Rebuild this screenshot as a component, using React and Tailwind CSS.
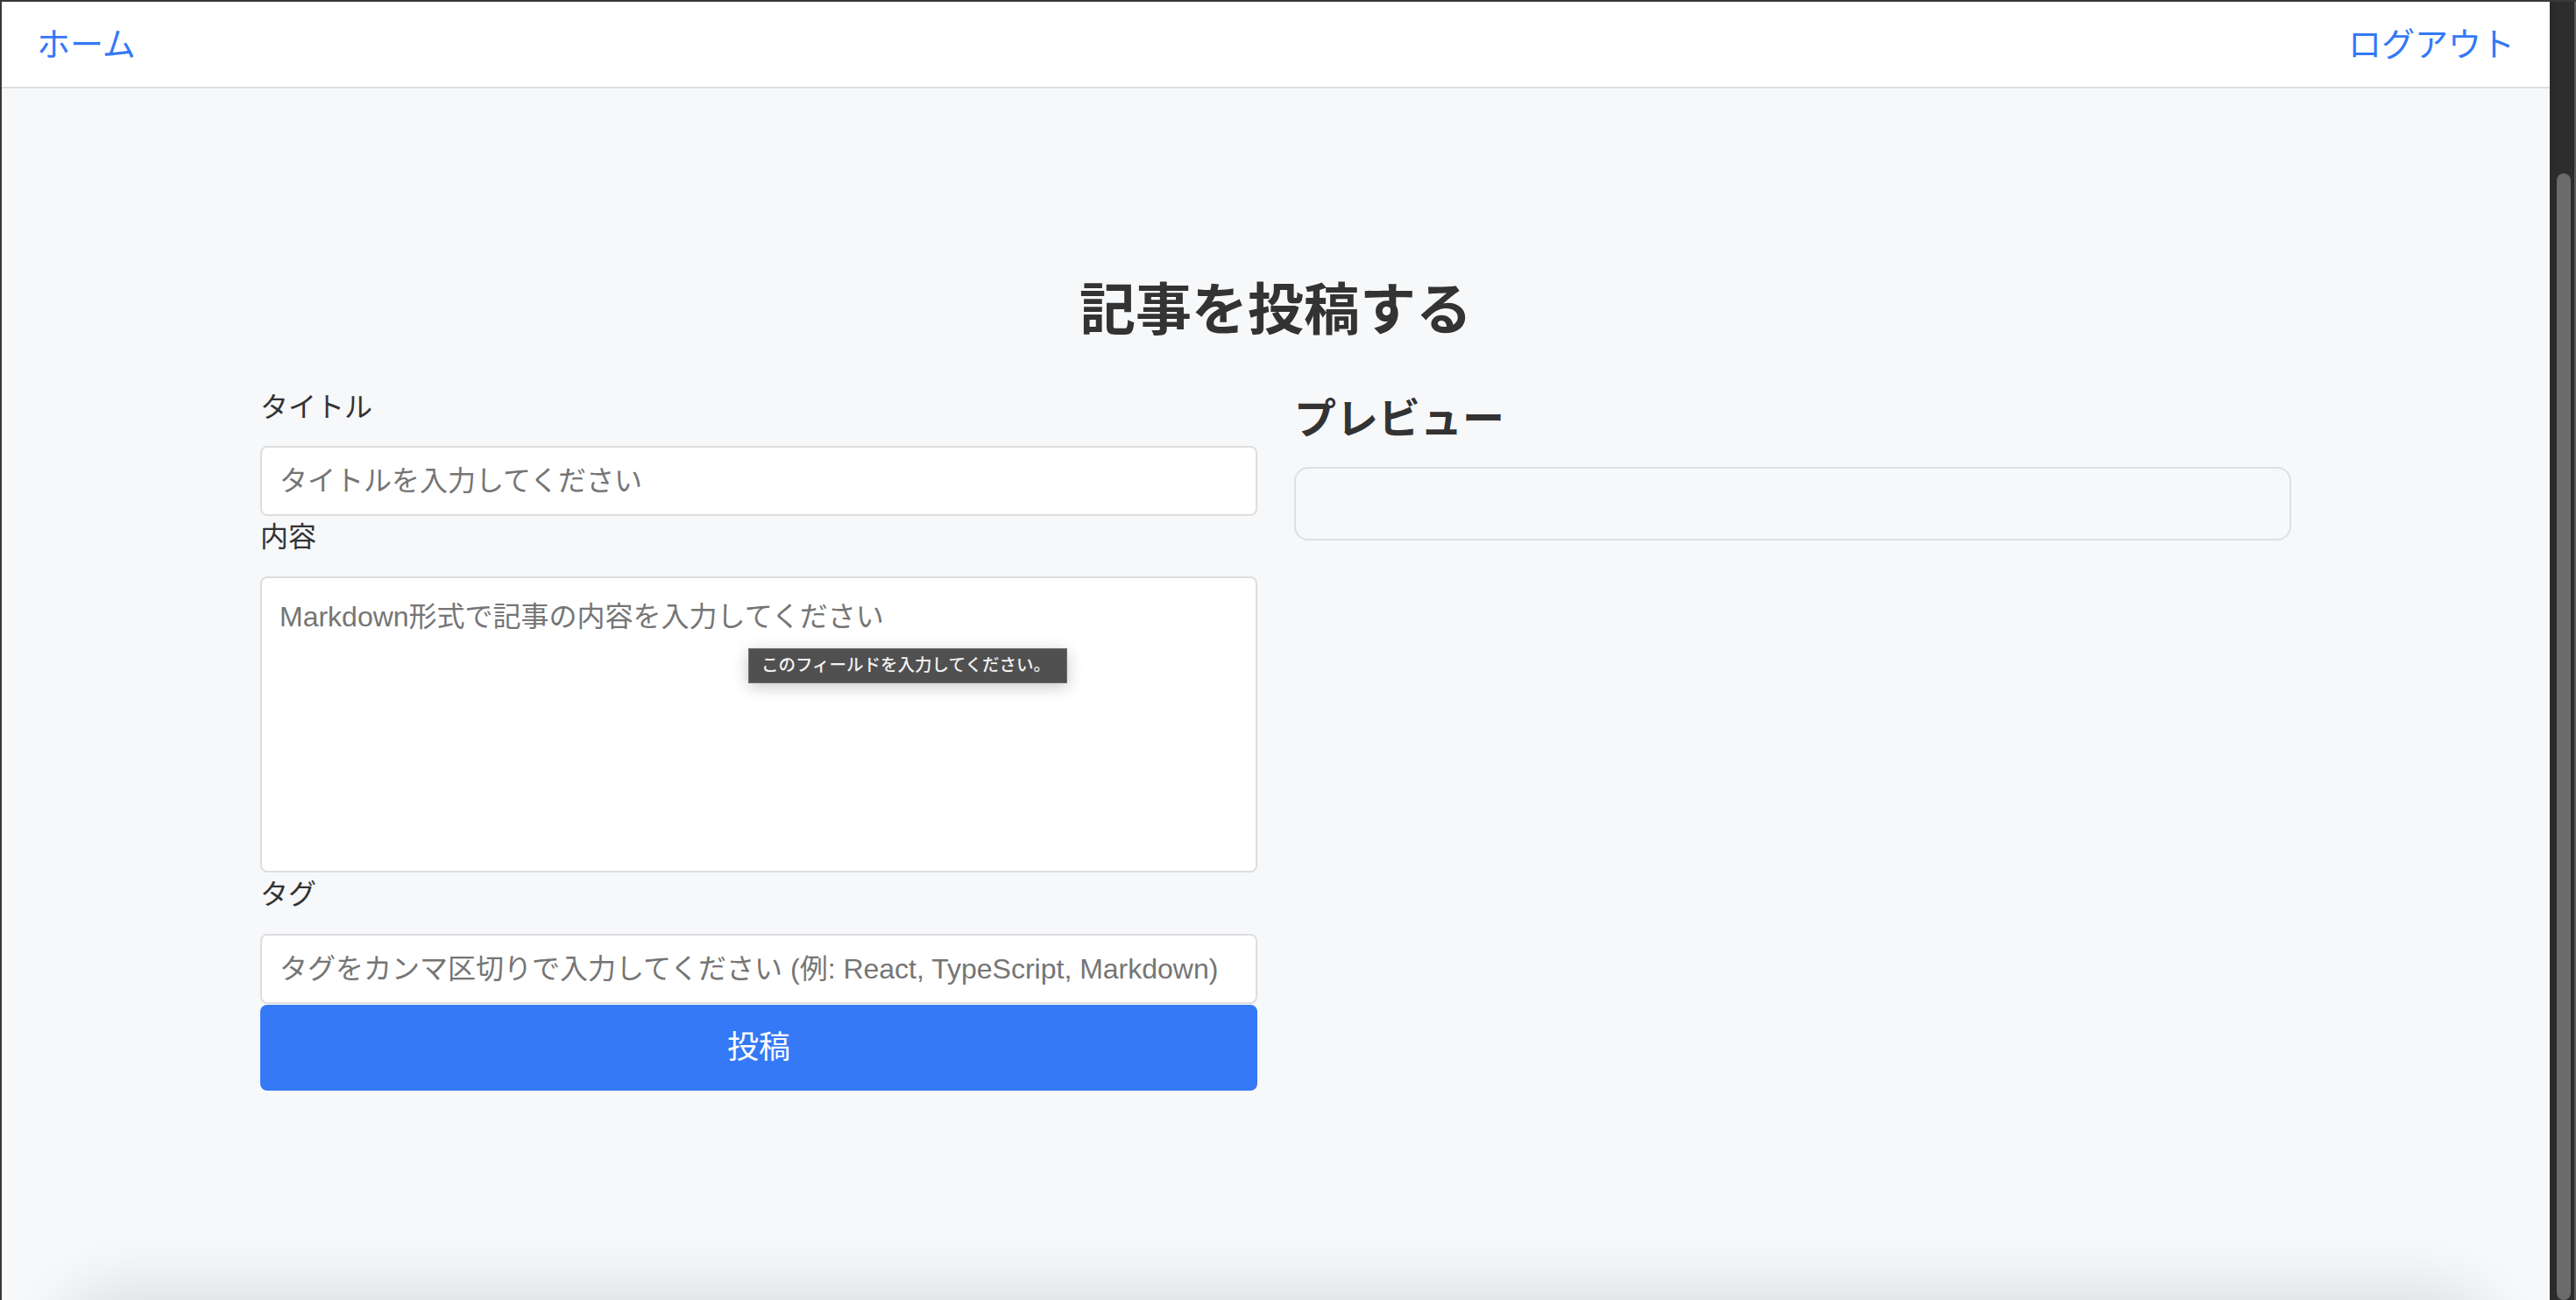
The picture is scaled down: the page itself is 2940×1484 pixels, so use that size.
import React from 'react';

// 記事投稿ページ（エディタ + プレビュー）
export default function App() {
  return (
    <div className="w-[2940px] h-[1484px] flex bg-[#2d2d2d] font-['Liberation_Sans','Noto_Sans_CJK_JP',sans-serif] overflow-hidden">
      {/* ブラウザの表示領域 */}
      <div className="relative flex-1 flex flex-col border-t-2 border-l-2 border-[#383838] bg-[#f7f8fa] overflow-hidden">
        {/* ヘッダー */}
        <header className="h-[99px] shrink-0 bg-white border-b-2 border-[#dedede] px-[40px] flex items-center justify-between">
          <a className="text-[38px] leading-none text-[#3478f6]">ホーム</a>
          <a className="text-[38px] leading-none text-[#3478f6]">ログアウト</a>
        </header>

        <main className="w-[2318px] mx-auto pt-[215px]">
          <h1 className="text-[64px] leading-[77px] font-bold text-[#333] text-center mb-[48px]">記事を投稿する</h1>

          <div className="grid grid-cols-2 gap-[42px] items-start">
            {/* 入力フォーム */}
            <form className="flex flex-col text-[#333]">
              <label className="text-[32px] leading-[48px] mb-[20px]">タイトル</label>
              <input
                type="text"
                placeholder="タイトルを入力してください"
                className="h-[80px] bg-white border-2 border-[#dedede] rounded-[8px] px-[20px] text-[32px] placeholder:text-[#757575] outline-none"
              />

              <label className="text-[32px] leading-[49px] mb-[20px]">内容</label>
              <div className="relative">
                <textarea
                  placeholder="Markdown形式で記事の内容を入力してください"
                  className="block w-full h-[338px] resize-none bg-white border-2 border-[#dedede] rounded-[8px] px-[20px] pt-[22px] text-[32px] leading-[44px] placeholder:text-[#757575] outline-none"
                />
                {/* バリデーションのツールチップ */}
                <div className="absolute left-[557px] top-[82px] w-[364px] h-[40px] flex items-center px-[14px] bg-[#505050] border border-[#6e6e6e] text-[#f2f2f2] text-[19.5px] font-medium whitespace-nowrap shadow-[0_4px_18px_rgba(0,0,0,0.22)]">
                  このフィールドを入力してください。
                </div>
              </div>

              <label className="text-[32px] leading-[50px] mb-[20px]">タグ</label>
              <input
                type="text"
                placeholder="タグをカンマ区切りで入力してください (例: React, TypeScript, Markdown)"
                className="h-[80px] bg-white border-2 border-[#dedede] rounded-[8px] px-[20px] text-[32px] placeholder:text-[#757575] outline-none"
              />

              <button type="button" className="mt-[1px] h-[98px] rounded-[8px] bg-[#3579f6] text-white text-[36px]">
                投稿
              </button>
            </form>

            {/* プレビュー */}
            <section className="pt-[9px]">
              <h2 className="text-[48px] leading-[58px] font-bold text-[#333] mb-[25px]">プレビュー</h2>
              <div className="h-[83px] border-2 border-[#dddfe3] rounded-[16px] p-[40px]" />
            </section>
          </div>
        </main>

        {/* 画面下端にかかる影 */}
        <div className="absolute left-[80px] right-[80px] top-[1484px] h-[120px] rounded-[60px] shadow-[0_0_60px_24px_rgba(0,0,0,0.09)] pointer-events-none" />
      </div>

      {/* スクロールバー */}
      <div className="w-[30px] shrink-0 flex border-t-2 border-[#383838]">
        <div className="w-[8px] bg-[#2b2b2b]" />
        <div className="w-[16px] pt-[196px]">
          <div className="h-full rounded-full bg-[#6b6b6b]" />
        </div>
        <div className="w-[4px]" />
        <div className="w-[2px] bg-[#5e5e5e]" />
      </div>
    </div>
  );
}
